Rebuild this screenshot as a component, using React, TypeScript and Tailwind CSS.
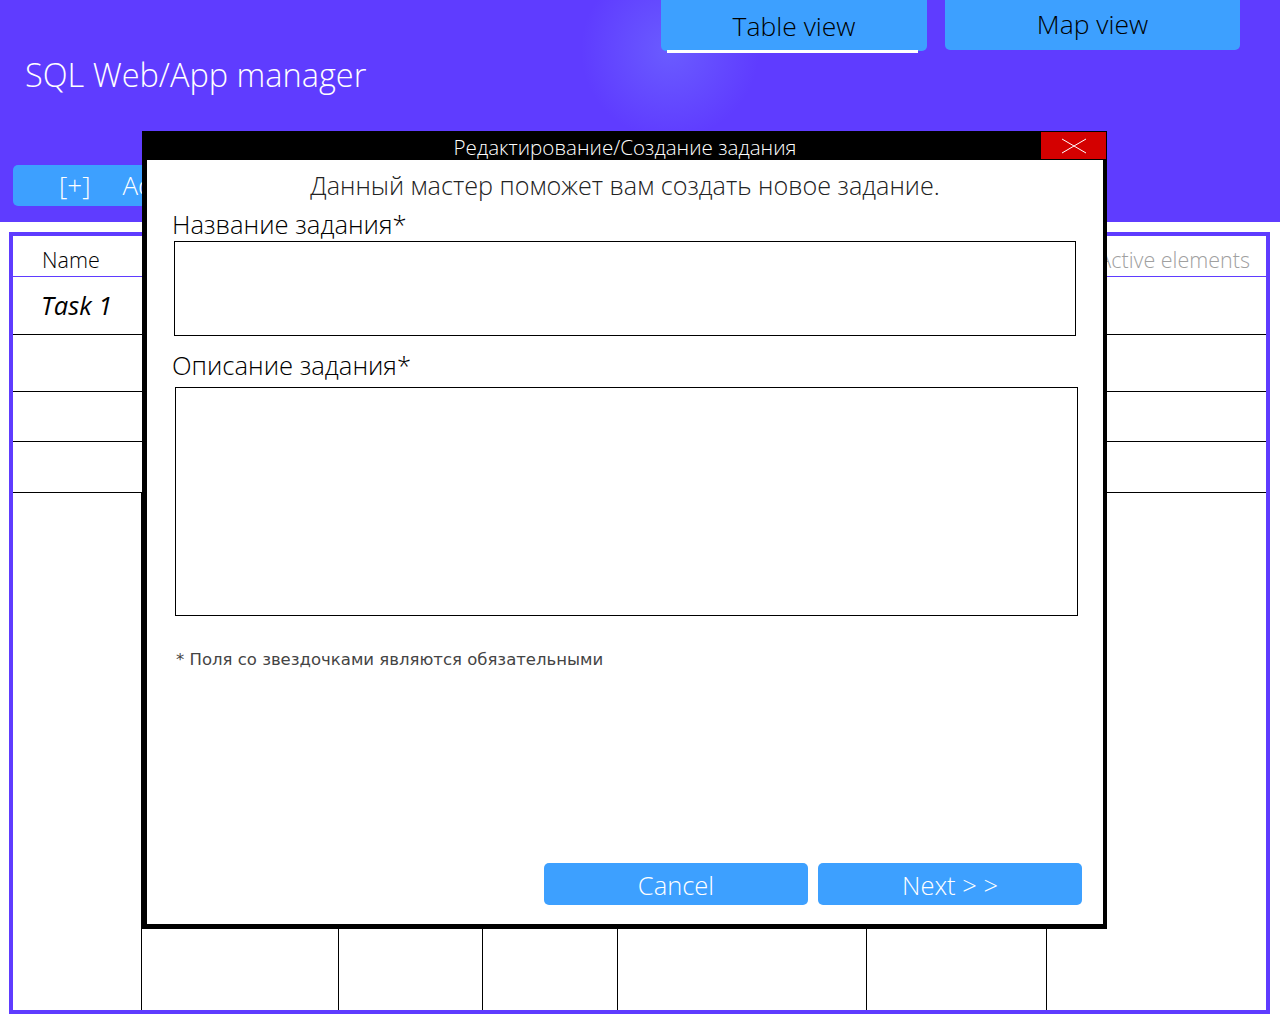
import React from 'react';

const ui = "font-['Open_Sans','Noto_Sans',sans-serif]";

const columnWidths = [129, 197, 144, 135, 249, 180];

export default function App() {
  return (
    <div className={`relative w-[1280px] h-[1024px] overflow-hidden bg-white ${ui}`}>
      {/* header */}
      <div className="relative h-[222px] bg-[#5f3cff] flex flex-col">
        <div className="absolute left-[580px] top-[-40px] w-[180px] h-[180px] rounded-full bg-[radial-gradient(circle,rgba(120,130,255,0.45),rgba(95,60,255,0)_70%)]" />
        <div className="relative flex items-start gap-[18px] pl-[661px] h-[54px]">
          <div className="flex flex-col w-[266px]">
            <div className="h-[51px] pt-[2px] bg-[#3da0ff] rounded-b-[5px] flex items-center justify-center text-[26.5px] font-light text-black">
              Table view
            </div>
            <div className="h-[3px] bg-white ml-[6px] mr-[9px] -mt-[1px]" />
          </div>
          <div className="w-[295px] h-[50px] bg-[#3da0ff] rounded-b-[5px] flex items-center justify-center text-[26.5px] font-light text-black">
            Map view
          </div>
        </div>
        <div className="relative ml-[25px] mt-[1px] h-[40px] leading-[40px] text-[32.5px] font-light text-white">
          SQL Web/App manager
        </div>
        <div className="relative ml-[13px] mt-[70px] w-[300px] h-[41px] bg-[#3da0ff] rounded-[5px] flex items-center pl-[46px] gap-[32px] text-[26px] font-light text-white">
          <span>[+]</span>
          <span>Add task</span>
        </div>
      </div>

      {/* table */}
      <div className="mt-[10px] ml-[9px] w-[1261px] h-[782px] border-4 border-[#5f3cff] flex flex-col">
        <div className="h-[41px] pt-[8px] border-b border-[#5f3cff] flex items-center justify-between pl-[29px] pr-[16px] text-[21.5px] font-light">
          <span className="text-black">Name</span>
          <span className="text-[#a0a0a0]">Active elements</span>
        </div>
        <div className="h-[58px] border-b border-black flex items-center pl-[28px] text-[25.5px] italic text-black">
          Task 1
        </div>
        <div className="h-[57px] border-b border-black" />
        <div className="h-[50px] border-b border-black" />
        <div className="h-[51px] border-b border-black" />
        <div className="flex-1 flex">
          {columnWidths.map((w, i) => (
            <div key={i} className="border-r border-black" style={{ width: w }} />
          ))}
          <div className="flex-1" />
        </div>
      </div>

      {/* modal */}
      <div className="absolute left-[142px] top-[131px] w-[965px] h-[798px] bg-black flex flex-col pl-[5px] pr-[4px] pb-[5px]">
        <div className="relative h-[29px] pt-[4px] flex items-center justify-center text-white text-[20.6px] font-light">
          Редактирование/Создание задания
          <div className="absolute right-[-3px] top-[1px] w-[65px] h-[27px] bg-[#d40000] flex items-center justify-center">
            <svg width="26" height="16" viewBox="0 0 26 16">
              <path d="M1 1 L25 15 M25 1 L1 15" stroke="white" strokeWidth="1" fill="none" />
            </svg>
          </div>
        </div>
        <div className="flex-1 bg-white flex flex-col">
          <div className="mt-[9px] h-[32px] leading-[32px] text-center text-[25.2px] font-light text-[#222]">
            Данный мастер поможет вам создать новое задание.
          </div>
          <div className="mt-[8px] ml-[25px] h-[32px] leading-[32px] text-[25.6px] font-light text-black">
            Название задания*
          </div>
          <div className="ml-[27px] w-[902px] h-[95px] border border-black" />
          <div className="mt-[14px] ml-[25px] h-[32px] leading-[32px] text-[25.6px] font-light text-black">
            Описание задания*
          </div>
          <div className="mt-[5px] ml-[28px] w-[903px] h-[229px] border border-black" />
          <div className="mt-[32px] ml-[29px] h-[24px] leading-[24px] text-[16.5px] text-[#444] font-['DejaVu_Sans',sans-serif]">
            * Поля со звездочками являются обязательными
          </div>
          <div className="mt-auto mb-[19px] mr-[21px] flex justify-end gap-[10px]">
            <button className="w-[264px] h-[42px] pt-[3px] bg-[#3da0ff] rounded-[5px] text-white text-[25.5px] font-light">
              Cancel
            </button>
            <button className="w-[264px] h-[42px] pt-[3px] bg-[#3da0ff] rounded-[5px] text-white text-[25.5px] font-light">
              Next &gt; &gt;
            </button>
          </div>
        </div>
      </div>
    </div>
  );
}
